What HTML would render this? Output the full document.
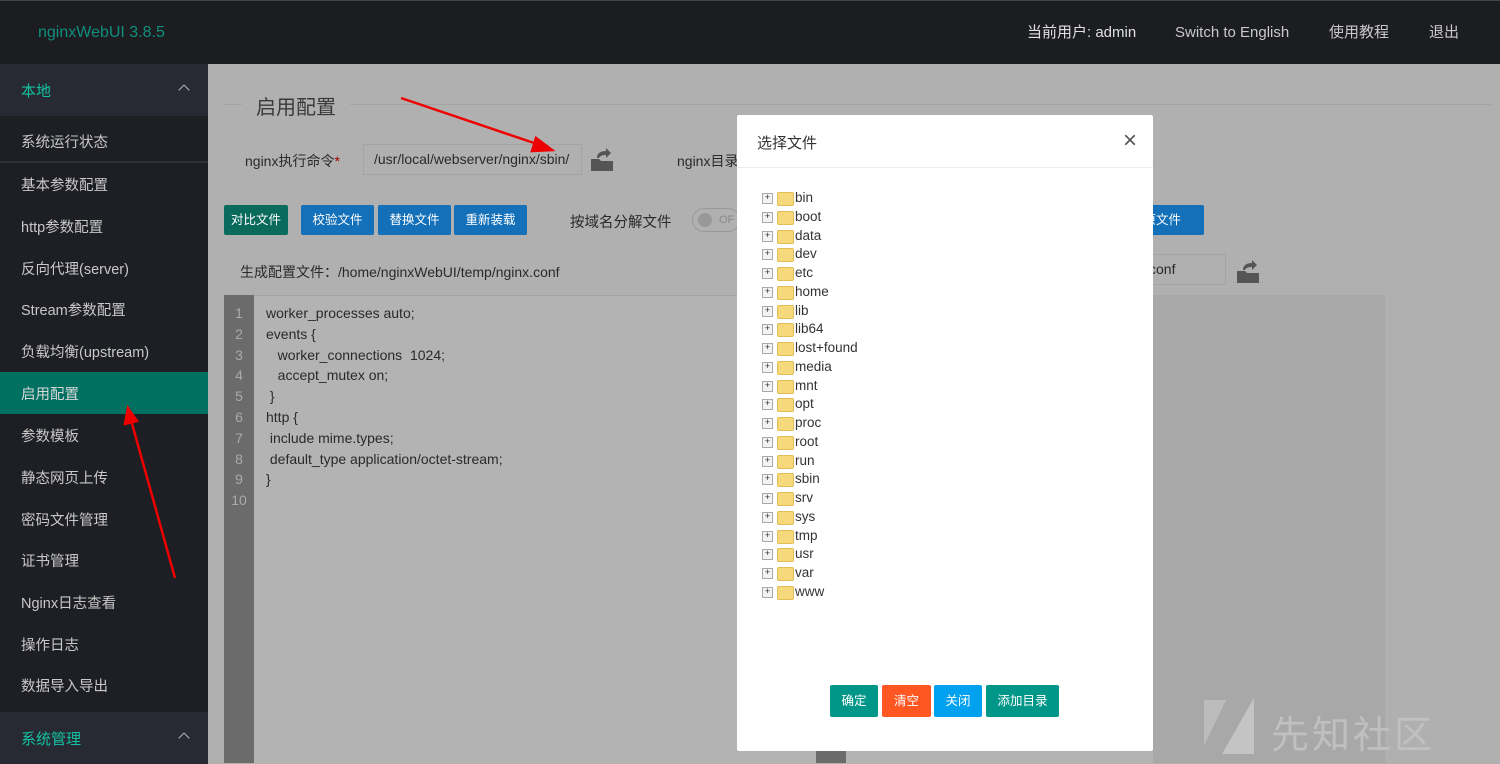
<!DOCTYPE html>
<html><head><meta charset="utf-8"><style>
*{margin:0;padding:0;box-sizing:border-box}
body{width:1500px;height:763px;overflow:hidden;background:#b0b0b0;font-family:"Liberation Sans","Noto Sans CJK SC",sans-serif;position:relative}
.abs{position:absolute}
.hdr{left:0;top:0;width:1500px;height:64px;background:#1c1d21;border-top:1px solid #444}
.hdr span{position:absolute;top:22px;font-size:15px;line-height:20px;color:#c9c9c9}
.side{left:0;top:64px;width:208px;height:699px;background:#1e1f24}
.grp{position:absolute;left:0;width:208px;height:52px;background:#272a33;color:#14c2a3;font-size:15px;padding:16px 21px}
.grp i{position:absolute;right:20px;top:22px;width:8px;height:8px;border-left:1.5px solid #bbb;border-top:1.5px solid #bbb;transform:rotate(45deg)}
.it{position:absolute;left:0;width:208px;height:42px;color:#c8c8c8;font-size:14.5px;padding:11px 21px}
.main{left:208px;top:64px;width:1292px;height:699px;background:#b0b0b0;overflow:hidden}
.btn{position:absolute;height:30px;color:#fff;font-size:12.5px;text-align:center;line-height:30px;border-radius:2px;white-space:nowrap}
.code{font-size:14px;color:#2a2a2a;line-height:20.8px}
.modal{left:737px;top:115px;width:416px;height:636px;background:#fff;border-radius:2px}
.tree div{height:18.75px;font-size:13.5px;color:#333;position:relative;padding-left:58px;line-height:18px}
.tree div:before{content:"+";position:absolute;left:25px;top:4px;width:9px;height:9px;border:1px solid #aaa;font-size:9px;line-height:7px;text-align:center;color:#333;background:#f3f3f3}
.tree div:after{content:"";position:absolute;left:40px;top:3px;width:15px;height:12px;background:#f6d97a;border:1px solid #e2bd55;border-radius:2px}
.mb{position:absolute;top:570px;height:32px;color:#fff;font-size:12.5px;line-height:32px;text-align:center;border-radius:2px}
</style></head><body>
<div class="abs hdr">
<span style="left:38px;color:#0f8f7d;font-size:16px">nginxWebUI 3.8.5</span>
<span style="left:1027px;color:#e0e0e0">当前用户: admin</span>
<span style="left:1175px">Switch to English</span>
<span style="left:1329px">使用教程</span>
<span style="left:1429px">退出</span>
</div>
<div class="abs side">
<div class="grp" style="top:0">本地<i></i></div>
<div class="it" style="top:56px">系统运行状态</div>
<div style="position:absolute;top:97px;left:0;width:208px;height:2px;background:#2f3138"></div>
<div class="it" style="top:99px">基本参数配置</div>
<div class="it" style="top:141px">http参数配置</div>
<div class="it" style="top:183px">反向代理(server)</div>
<div class="it" style="top:224px">Stream参数配置</div>
<div class="it" style="top:266px">负载均衡(upstream)</div>
<div class="it" style="top:308px;background:#007061;color:#d8d8d8">启用配置</div>
<div class="it" style="top:350px">参数模板</div>
<div class="it" style="top:392px">静态网页上传</div>
<div class="it" style="top:434px">密码文件管理</div>
<div class="it" style="top:475px">证书管理</div>
<div class="it" style="top:517px">Nginx日志查看</div>
<div class="it" style="top:559px">操作日志</div>
<div class="it" style="top:600px">数据导入导出</div>
<div class="grp" style="top:648px">系统管理<i></i></div>
</div>
<div class="abs main">
<div class="abs" style="left:16px;top:40px;width:1268px;height:1px;background:#a4a4a4"></div>
<div class="abs" style="left:34px;top:27px;padding:0 14px;background:#b0b0b0;font-size:20px;color:#3a3a3a">启用配置</div>
<div class="abs" style="left:37px;top:87px;font-size:14px;color:#2a2a2a">nginx执行命令<span style="color:#a00">*</span></div>
<div class="abs" style="left:155px;top:80px;width:219px;height:31px;border:1px solid #a4a4a4;font-size:14px;color:#2a2a2a;padding:6px 10px;overflow:hidden;white-space:nowrap">/usr/local/webserver/nginx/sbin/</div>
<svg class="abs" style="left:381px;top:81px" width="26" height="28" viewBox="0 0 26 28"><path d="M2 14h8l2 2h12v10H2z" fill="#555"/><path d="M8 13c0-5 4-7 9-7V3l5 5-5 5v-3c-4 0-6 1-7 3z" fill="#555"/></svg>
<div class="abs" style="left:469px;top:87px;font-size:14px;color:#2a2a2a">nginx目录</div>
<div class="btn" style="left:16px;top:141px;width:64px;background:#0a6a5b">对比文件</div>
<div class="btn" style="left:93px;top:141px;width:73px;background:#1470b8">校验文件</div>
<div class="btn" style="left:170px;top:141px;width:73px;background:#1470b8">替换文件</div>
<div class="btn" style="left:246px;top:141px;width:73px;background:#1470b8">重新装载</div>
<div class="abs" style="left:362px;top:147px;font-size:14.5px;color:#2a2a2a">按域名分解文件</div>
<div class="abs" style="left:484px;top:144px;width:48px;height:24px;border:1px solid #999;border-radius:12px;font-size:11px;color:#888;padding:5px 0 0 26px">OF<span style="position:absolute;left:5px;top:4px;width:14px;height:14px;border-radius:50%;background:#999"></span></div>
<div class="btn" style="left:900px;top:141px;width:96px;background:#1470b8">还原文件</div>
<div class="abs" style="left:32px;top:198px;font-size:14px;color:#2a2a2a">生成配置文件：/home/nginxWebUI/temp/nginx.conf</div>
<div class="abs" style="left:900px;top:190px;width:118px;height:31px;border:1px solid #a4a4a4;font-size:14px;color:#2a2a2a;padding:6px 40px">conf</div>
<svg class="abs" style="left:1027px;top:193px" width="26" height="28" viewBox="0 0 26 28"><path d="M2 14h8l2 2h12v10H2z" fill="#555"/><path d="M8 13c0-5 4-7 9-7V3l5 5-5 5v-3c-4 0-6 1-7 3z" fill="#555"/></svg>
<div class="abs" style="left:16px;top:231px;width:1161px;height:470px;background:#b3b3b3;border-top:1px solid #a4a4a4"></div>
<div class="abs" style="left:945px;top:231px;width:232px;height:470px;background:#a8a8a8"></div>
<div class="abs" style="left:16px;top:231px;width:30px;height:470px;background:#6b6b6b"></div>
<div class="abs" style="left:608px;top:686px;width:30px;height:15px;background:#6b6b6b"></div>
<div class="abs code" style="left:16px;top:239px;width:30px;text-align:center;color:#aaa">1<br>2<br>3<br>4<br>5<br>6<br>7<br>8<br>9<br>10</div>
<div class="abs code" style="left:58px;top:239px;white-space:pre">worker_processes auto;
events {
   worker_connections  1024;
   accept_mutex on;
 }
http {
 include mime.types;
 default_type application/octet-stream;
}</div>
<svg class="abs" style="left:996px;top:630px" width="60" height="64"><polygon points="0,6 22,6 0,52" fill="#bcbcbc"/><polygon points="50,4 50,60 18,60" fill="#c4c4c4"/></svg>
<div class="abs" style="left:1063px;top:640px;font-size:38px;color:#c0c0c0;letter-spacing:3px">先知社区</div>
</div>
<svg class="abs" style="left:0;top:0" width="1500" height="763"><g stroke="#e00" stroke-width="2.5" fill="#e00"><line x1="401" y1="98" x2="540" y2="145"/><polygon points="552,150 536,138 532,151"/><line x1="175" y1="578" x2="131" y2="420"/><polygon points="128,408 125,424 137,421"/></g></svg>
<div class="abs modal">
<div style="height:53px;border-bottom:1px solid #eee;padding:17px 20px;font-size:15px;color:#333">选择文件<span style="position:absolute;right:16px;top:12px;font-size:24px;color:#555">×</span></div>
<div class="tree" style="position:absolute;top:74px;left:0;width:416px">
<div>bin</div><div>boot</div><div>data</div><div>dev</div><div>etc</div><div>home</div><div>lib</div><div>lib64</div><div>lost+found</div><div>media</div><div>mnt</div><div>opt</div><div>proc</div><div>root</div><div>run</div><div>sbin</div><div>srv</div><div>sys</div><div>tmp</div><div>usr</div><div>var</div><div>www</div>
</div>
<div class="mb" style="left:93px;width:48px;background:#009688">确定</div>
<div class="mb" style="left:145px;width:49px;background:#ff5722">清空</div>
<div class="mb" style="left:197px;width:48px;background:#00a2f0">关闭</div>
<div class="mb" style="left:249px;width:73px;background:#009688">添加目录</div>
</div>
</body></html>
